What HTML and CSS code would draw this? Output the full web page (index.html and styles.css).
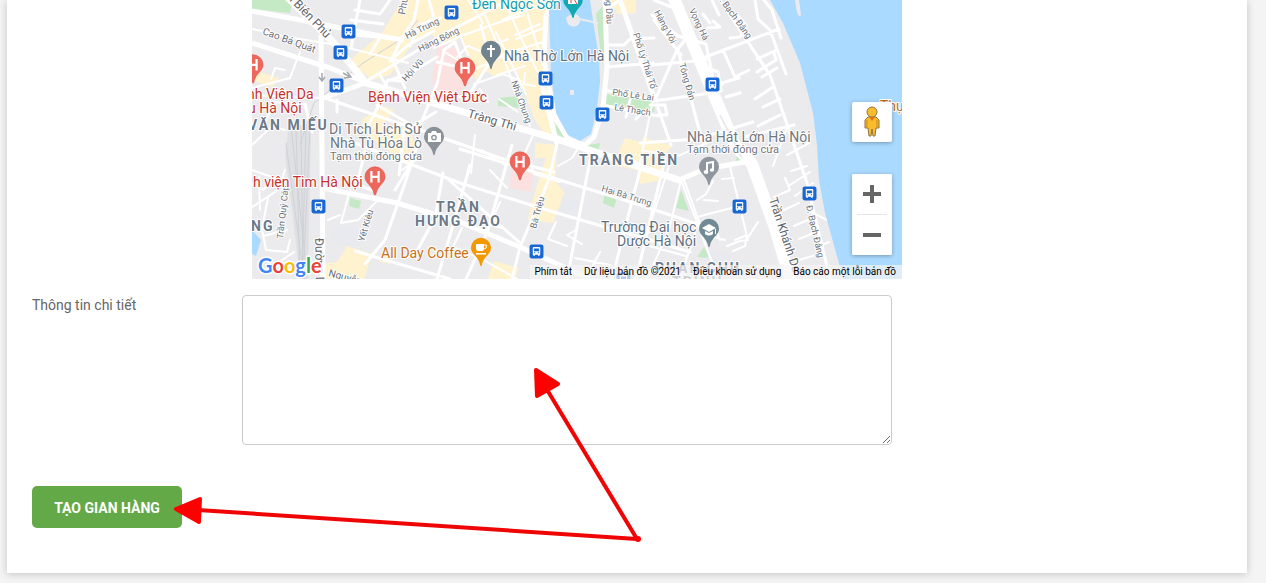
FILE: index.html
```
<!DOCTYPE html>
<html lang="vi">
<head>
<meta charset="utf-8">
<meta name="viewport" content="width=device-width, initial-scale=1">
<title>Tạo gian hàng</title>
<link rel="stylesheet" href="styles.css">
</head>
<body>
<main class="card">
<form class="shop-form">
  <div class="map">
    <svg class="map-canvas" viewBox="252 0 650 279" preserveAspectRatio="xMinYMin slice" role="img" aria-label="Bản đồ Hà Nội">
      <defs>
        <symbol id="bus" viewBox="0 0 14 14">
          <rect x="0.5" y="0.5" width="13" height="13" rx="2" fill="#1967d2"/>
          <path d="M3.5 3.5Q3.5 2.7 4.5 2.7H9.5Q10.5 2.7 10.5 3.5V10H9.8V11.3H8.6V10H5.4V11.3H4.2V10H3.5Z" fill="#fff"/>
          <path d="M4.6 4.2H9.4V6.8H4.6Z" fill="#1967d2"/>
          <path d="M4.6 8.2H5.8M8.2 8.2H9.4" stroke="#1967d2"/>
        </symbol>
        <symbol id="pin" viewBox="0 0 22 30">
          <path d="M11 .8A10 10 0 0 0 1 10.800C1 17.500 8.5 19 10.2 28.3Q11 30 11.8 28.3C13.5 19 21 17.500 21 10.800A10 10 0 0 0 11 .8Z"/>
        </symbol>
        <symbol id="hospital" viewBox="0 0 22 30">
          <use href="#pin" width="22" height="30" fill="#ee675c" stroke="#e0483d" stroke-width=".6"/>
          <path d="M7.4 5V16.500M14.6 5V16.500M7.4 10.8H14.6" stroke="#fff" stroke-width="2.200" fill="none"/>
        </symbol>
      </defs>
      <rect x="252" width="650" height="279" fill="#ebebed"/>
      <g class="blocks">
        <path fill="#fff2cf" d="M349 61L382 33L402 0H558L547 18L545 70L556 139L545 135L535 120L524 92L516 70L495 77L484 70L475 80L470 60L462 38L444 45L429 32L410 47L390 75L372 80ZM252 70L279 78L272 87L252 80ZM361 120L384 106L394 110L382 126L410 128L418 160L406 164L365 133ZM535 143L557 145L555 180L564 193L553 223L528 220L531 205L546 158L535 158ZM347 246L372 254L364 279H320V264L337 262ZM494 261L519 268L515 279H488ZM625 138L645 143L665 163L662 180L640 184L637 170L613 165ZM643 137L672 146L662 158L640 155ZM382 253L394 254L391 264L380 262ZM609 0H636V13L618 14Z"/>
        <path fill="#fbe2e0" d="M438 44L460 50L465 78L462 101L437 95L432 80ZM511 167L534 170L531 192L510 188Z"/>
        <path fill="#c5e8c5" d="M252 0H293L290 13L252 9ZM498 98L519 96L520 108L498 106ZM603 94L655 100L654 112L604 104ZM350 198L361 201L359 209L349 206ZM605 192L617 197L614 208L603 203ZM681 190L689 211L676 208ZM739 152L745 163L735 162ZM557 118L566 137L583 146L600 143L598 152L579 150L555 132ZM596 14L605 3L607 44L602 64ZM704 247L710 258L697 257Z"/>
        <path fill="#e8eaef" d="M334 229L351 226L365 234L361 246L335 244ZM563 196L581 202L575 217L559 214ZM709 250L730 255L725 279H704ZM264 41L274 46L272 51L263 49Z"/>
      </g>
      <path class="rail-bed" d="M289 125H311L308 279H300L292 210L285 155Z"/>
      <path class="rail" d="M286 143L304 279M291 126L306 265M296 126L300 279M301 126L303 279M306 126L302 279M310 126L303 279M418 20L403 38L363 63L314 103L300 145"/>
      <g class="streets">
        <path class="lane" d="M253 29L287 37L337 45L408 63M252 88L290 78L300 52M252 95L320 98M271 79L275 68L285 70M265 123L274 102L306 105M252 145L272 126L285 130M252 170L275 178L263 190L252 184M252 207L278 190L285 170M268 198L262 229L266 250L287 252L290 240M263 236L287 230M272 267L294 252M259 177L260 210"/>
        <path d="M360 0L351 48M355 10L380 14L390 0M351 20L383 24M354 35L401 39L434 18L429 0M391 61L402 38L414 20L418 0M390 61L408 45L434 31M410 46L420 25L440 18M380 75L391 93M393 60L405 88M365 82L453 29L479 16L507 0M391 80L412 72L437 57M378 102L388 80L400 81M368 126L384 95M419 128L437 84L444 50L455 42L465 70M437 62L462 68M433 92L467 98L490 62L481 25M377 105L413 126L436 112M325 98L460 144M337 100L337 112M305 104L312 132"/>
        <path class="lane" d="M434 48L464 35L500 22L524 15M443 51L469 67M465 74L511 52L543 42M474 84L503 74L521 81M457 57L468 46L480 51L508 39M458 30L468 55M485 15L507 67L530 126M496 32L526 94M502 20L545 3M515 35L540 24M468 0L483 23M523 0L546 73M504 0L521 38L544 85M516 39L546 27M497 75L525 66M499 99L518 112M480 89L488 102M525 73L524 84L535 86"/>
        <path d="M607 45L624 45L630 39L654 38M607 67L653 63M604 90L657 101M602 105L658 116M626 117L630 100M643 111L636 119M607 9L620 0M652 15L678 36L706 44L713 78L723 83L717 90M654 20L681 55M654 0L674 8M652 65L706 60M703 58L779 29M655 100L677 50L685 40M678 50L700 133M654 101L711 93M658 108L671 145M640 143L697 139L753 122M650 105H665L667 115H658M708 28L720 27L713 21M710 23L703 14M738 16L746 25L740 37L730 38M723 50L735 77L749 70M712 0L719 15M720 0L770 75L790 133L807 183L830 279M755 0L758 19L770 30L786 74M764 0L772 10L781 38M757 59L777 50M757 72L776 60L774 53M762 77L777 68M755 99L773 87M763 107L780 99M726 97L740 93M758 126L780 115M725 82L739 78M744 137L794 125M700 65L718 72L721 91"/>
        <path d="M347 140L460 183L547 210L690 252M460 149L640 205L703 226M380 38L370 54M419 140L405 183L385 240L365 264M404 131L399 175M365 151L357 185L372 190M414 159L395 190M443 173L435 218L414 256M470 165L456 215L437 279M512 145L487 233L466 279M558 140L548 182L520 247L512 279M592 150L567 279M640 170L612 279M665 159L636 279M415 128L500 158L554 172M355 251L450 279M449 180L519 242"/>
        <path class="lane" d="M420 157L402 170M350 190L341 223L358 220L378 200M328 220L340 215M462 228L453 247L482 259L517 279M485 236L500 202M490 170L507 188M480 222L502 228M475 135L471 173M505 165L482 150M529 156L534 174L560 182M535 131L524 155M558 166L572 158L580 145M556 222L548 239L567 246M576 230L567 235L582 244M600 252L592 267M575 258L610 265"/>
        <path class="lane" d="M653 100L640 163M625 155L640 164L676 179M645 151L678 156L709 142M681 180L669 230L647 279M681 180L710 257L720 279M684 180L704 235L725 240M730 167L748 240L740 241L727 246M735 240L747 235L745 246L733 251M697 217L739 206M697 200L706 194L713 181M704 200L718 201M722 179L734 178M750 162L790 279M774 197L790 190L785 178M787 155L809 143M786 130L773 166M810 172L790 185M791 171L807 166M799 203L784 210M808 220L794 226M799 239L814 233M811 212L831 222M813 183L795 196M817 247L829 242M799 260L823 253M670 163L650 225M649 246L686 256M695 233L680 279M720 240L713 223M747 239L758 222"/>
      </g>
      <g class="roads">
        <path d="M252 11L295 19L390 38L404 40M252 43L330 68L365 82M321 35L323 279M323 188L397 203L460 222L520 247L590 279M323 98L365 83M542 84L557 144M605 0L607 67L603 108L594 137L585 145L568 139L556 119L549 88L544 59L546 16L555 0M620 0L655 100M679 180L705 169L739 163L754 160"/>
        <path class="avenue" d="M285 -5L333 42L366 83L460 111L557 139L640 167L682 181"/>
        <path class="avenue wide" d="M673 -4L711 88L735 145L752 164L774 225L792 285"/>
      </g>
      <path class="water" d="M549 9L553 0H590L592 14L599 58L600 82L597 108L591 134L580 141L568 135L556 113L551 75ZM770 0L783 23L800 63L813 113L817 145L819 180L825 213L840 267L844 279H902V0ZM252 230L261 240L256 256L252 254Z"/>
      <path fill="#ebebed" d="M566 18Q569 14 575 14Q581 15 580 22Q577 28 571 26Q567 25 566 18ZM570 90H574V95H570ZM795 0H799L801 15Q799 18 797 12Z"/>
      <path fill="none" stroke="#ebebed" stroke-width="2" d="M579 19L598 23"/>
      <path fill="none" stroke="#ebebed" stroke-width="2" d="M720 115L742 158"/>
      <path fill="none" stroke="#a4a7ab" stroke-width="1.5" d="M322 73V80M319 77L322 81L325 77M343 73L350 77M344 78L351 77L347 72"/>

      <g class="street-names">
        <text class="major" transform="translate(282 -7) rotate(46)">ện Biên Phủ</text>
        <text transform="translate(262 34) rotate(20)">Cao Bá Quát</text>
        <text transform="translate(405 15) rotate(-80)">Phủ</text>
        <text class="small" transform="translate(407 39) rotate(-26)">Hà Trung</text>
        <text class="small" transform="translate(420 52) rotate(-26)">Hàng Bông</text>
        <text class="small" transform="translate(406 82) rotate(-48)">Hội Vũ</text>
        <text class="small" transform="translate(511 82) rotate(70)">Nhà Chung</text>
        <text class="major" transform="translate(467 117) rotate(16)">Tràng Thi</text>
        <text class="small" transform="translate(605 -9) rotate(87)">ong Dầu</text>
        <text class="small" transform="translate(633 34) rotate(72)">Phố Lý Thái Tổ</text>
        <text class="small" transform="translate(612 95) rotate(8)">Phố Lê Lai</text>
        <text class="small" transform="translate(614 110) rotate(9)">Lê Thạch</text>
        <text class="small" transform="translate(654 12) rotate(62)">Hàng Vôi</text>
        <text class="small" transform="translate(689 10) rotate(65)">Vọng Hà</text>
        <text class="small" transform="translate(716 -4) rotate(54)">Đ. Bạch Đằng</text>
        <text class="small" transform="translate(679 64) rotate(74)">Tông Đản</text>
        <text class="small" transform="translate(601 191) rotate(17)">Hai Bà Trưng</text>
        <text class="small" transform="translate(536 229) rotate(-75)">Bà Triệu</text>
        <text class="small" transform="translate(364 242) rotate(-73)">Yết Kiêu</text>
        <text class="small" transform="translate(283 239) rotate(-84)">Trần Quý Cáp</text>
        <text class="major" transform="translate(315 238) rotate(89)">Đường L</text>
        <text transform="translate(328 276) rotate(15)">Nguyễn</text>
        <text class="major" transform="translate(769 199) rotate(72)">Trần Khánh Dư</text>
        <text class="small" transform="translate(806 206) rotate(77)">Đ. Bạch Đằng</text>
      </g>

      <g class="districts">
        <text x="248" y="130">VĂN MIẾU</text>
        <text x="436" y="212">TRẦN</text>
        <text x="415" y="226">HƯNG ĐẠO</text>
        <text x="579" y="165">TRÀNG TIỀN</text>
        <text x="251" y="231">NG</text>
        <text x="655" y="273">PHAN CHU</text>
        <text x="672" y="287">TRINH</text>
      </g>

      <g class="places">
        <text class="teal" x="472" y="9">Đền Ngọc Sơn</text>
        <text class="slate" x="504" y="61">Nhà Thờ Lớn Hà Nội</text>
        <text class="red" x="368" y="102">Bệnh Viện Việt Đức</text>
        <text class="red" x="247" y="99">nh Viện Da</text>
        <text class="red" x="248" y="113">u Hà Nội</text>
        <text class="red" x="253" y="187">h viện Tim Hà Nội</text>
        <text class="grey" x="329" y="134">Di Tích Lịch Sử</text>
        <text class="grey" x="330" y="148">Nhà Tù Hỏa Lò</text>
        <text class="grey note" x="330" y="160">Tạm thời đóng cửa</text>
        <text class="grey" x="687" y="142">Nhà Hát Lớn Hà Nội</text>
        <text class="grey note" x="687" y="153">Tạm thời đóng cửa</text>
        <text class="slate" x="601" y="232">Trường Đại học</text>
        <text class="slate" x="617" y="246">Dược Hà Nội</text>
        <text class="orange" x="381" y="258">All Day Coffee</text>
        <text class="orange" x="880" y="111">Thụy</text>
      </g>

      <g class="stops">
        <use href="#bus" x="444" y="5" width="15" height="15"/>
        <use href="#bus" x="341" y="24" width="15" height="15"/>
        <use href="#bus" x="333" y="45" width="15" height="15"/>
        <use href="#bus" x="329" y="78" width="15" height="15"/>
        <use href="#bus" x="538" y="71" width="15" height="15"/>
        <use href="#bus" x="539" y="95" width="15" height="15"/>
        <use href="#bus" x="595" y="107" width="15" height="15"/>
        <use href="#bus" x="705" y="77" width="15" height="15"/>
        <use href="#bus" x="311" y="199" width="15" height="15"/>
        <use href="#bus" x="529" y="244" width="15" height="15"/>
        <use href="#bus" x="732" y="199" width="15" height="15"/>
        <use href="#bus" x="802" y="186" width="15" height="15"/>
        <use href="#bus" x="616" y="272" width="15" height="15"/>
      </g>
      <g class="pins">
        <use href="#hospital" x="242" y="54" width="22" height="30"/>
        <use href="#hospital" x="454" y="57" width="22" height="30"/>
        <use href="#hospital" x="509" y="151" width="22" height="30"/>
        <use href="#hospital" x="364" y="166" width="22" height="30"/>
        <use href="#pin" x="480" y="40" width="22" height="30" fill="#70838f"/>
        <path d="M491 45V57M487 49H495" stroke="#fff" stroke-width="2"/>
        <use href="#pin" x="423" y="126" width="22" height="30" fill="#8b9199"/>
        <path d="M428 133H431L432 131H436L437 133H441V142H428Z" fill="#fff"/>
        <circle cx="434" cy="137.500" r="2.200" fill="none" stroke="#8b9199" stroke-width="1.3"/>
        <use href="#pin" x="698" y="156" width="22" height="30" fill="#8f969d"/>
        <path d="M707 172V163L713 162V170" stroke="#fff" stroke-width="2" fill="none"/>
        <ellipse cx="706" cy="172" rx="2.4" ry="2" fill="#fff"/><ellipse cx="712" cy="170" rx="2.2" ry="1.8" fill="#fff"/>
        <use href="#pin" x="698" y="218" width="22" height="30" fill="#728a93"/>
        <path d="M702 228L709 224L716 228L709 232ZM705 231L709 233L713 231V234Q709 237 705 234ZM715 229H716V234H715Z" fill="#fff"/>
        <use href="#pin" x="470" y="237" width="22" height="30" fill="#f29900"/>
        <path d="M476 244H484V249Q484 251 482 251H478Q476 251 476 249ZM476 253H486V254.500H476Z" fill="#fff"/>
        <path d="M484 245H486.500Q487 249 484 249" stroke="#fff" fill="none"/>
        <use href="#pin" x="562" y="-10" width="22" height="29" fill="#12a9b5"/>
        <path d="M568 -3H578V4H568Z" fill="#fff"/><path d="M571 0V3M574 -1L577 4" stroke="#ea4335"/>
      </g>
      <text class="google" x="258" y="273"><tspan fill="#4285f4">G</tspan><tspan fill="#ea4335">o</tspan><tspan fill="#fbbc04">o</tspan><tspan fill="#4285f4">g</tspan><tspan fill="#34a853">l</tspan><tspan fill="#ea4335">e</tspan></text>
    </svg>
    <div class="controls">
      <button class="control pegman" type="button" aria-label="Chế độ xem phố">
        <svg width="20" height="32" viewBox="0 0 20 32" aria-hidden="true">
          <path d="M6 11H14L17 14V22L14 22L13 30H11L10 23L9 30H7L6 22L3 22V14Z" fill="#fbbc2b" stroke="#8f7440" stroke-linejoin="round"/>
          <circle cx="10" cy="6" r="5" fill="#fbbc2b" stroke="#8f7440"/>
          <path d="M7 11H13L10 15Z" fill="#e37418"/>
          <path d="M5 14V21M15 14V21" stroke="#c58b24"/>
        </svg>
      </button>
      <div class="zoom">
        <button class="control" type="button" aria-label="Phóng to"><svg width="18" height="18" viewBox="0 0 18 18"><path d="M9 0V18M0 9H18" stroke="#666" stroke-width="4"/></svg></button>
        <hr class="divider">
        <button class="control" type="button" aria-label="Thu nhỏ"><svg width="18" height="18" viewBox="0 0 18 18"><path d="M0 9H18" stroke="#666" stroke-width="4"/></svg></button>
      </div>
    </div>
    <div class="attribution">
      <button type="button">Phím tắt</button>
      <span>Dữ liệu bản đồ ©2021</span>
      <a href="#terms">Điều khoản sử dụng</a>
      <a href="#report">Báo cáo một lỗi bản đồ</a>
    </div>
  </div>
  <div class="field">
    <label for="details">Thông tin chi tiết</label>
    <textarea id="details" name="details"></textarea>
  </div>
  <button class="submit" type="submit">TẠO GIAN HÀNG</button>
  <svg class="arrows" width="470" height="180" viewBox="172 365 470 180" aria-hidden="true">
    <path d="M546 388L637 539L198 510" fill="none" stroke="#f00505" stroke-width="4" stroke-linecap="round" stroke-linejoin="round"/>
    <circle cx="638" cy="539" r="3"/>
    <path d="M536 370L558 384L537 396ZM176 509L200 499L199 522Z" stroke="#f00" stroke-width="4" stroke-linejoin="round"/>
  </svg>
</form>
</main>
</body>
</html>
```
FILE: styles.css
```
* { box-sizing: border-box; }
body {
  margin: 0;
  padding: 0 19px 10px 7px;
  background: #f4f4f4;
  color: #666;
  font: 14px/20px Roboto, sans-serif;
}
.card {
  background: #fff;
  box-shadow: 0 1px 8px rgba(0, 0, 0, .2);
}
.shop-form {
  position: relative;
  display: flex;
  flex-direction: column;
  align-items: flex-start;
  padding: 0 25px 45px;
}
.map {
  position: relative;
  align-self: stretch;
  max-width: 870px;
  margin-bottom: 16px;
  padding-left: 220px;
}
.map-canvas { display: block; width: 100%; height: 279px; }

.rail-bed { fill: #dfe0e4; }
.rail { fill: none; stroke: #cfd1d5; stroke-width: 1; }
.streets { fill: none; stroke: #fff; stroke-width: 3; stroke-linejoin: round; stroke-linecap: round; }
.streets .lane { stroke-width: 2; }
.roads { fill: none; stroke: #fff; stroke-width: 5; stroke-linejoin: round; }
.avenue { stroke-width: 7; }
.avenue.wide { stroke-width: 12; }
.water { fill: #aadaff; }

.map-canvas text {
  paint-order: stroke;
  stroke: #fff;
  stroke-width: 2px;
  stroke-linejoin: round;
}
.street-names { font-size: 10px; fill: #6b7076; }
.street-names .major { font-size: 12px; fill: #5f6469; }
.street-names .small { font-size: 9px; }
.districts { font-size: 14px; font-weight: 700; letter-spacing: 2px; fill: #6b7988; }
.places { font-size: 14px; }
.places .note { font-size: 11px; }
.teal { fill: #129eaf; }
.slate { fill: #607080; }
.grey { fill: #70777e; }
.red { fill: #c5322d; }
.orange { fill: #c77116; }
.map-canvas .google { font: 700 20px Lato, sans-serif; stroke-width: 3px; }

.controls {
  position: absolute;
  top: 102px;
  right: 10px;
  display: flex;
  flex-direction: column;
  gap: 32px;
}
.control {
  display: grid;
  place-items: center;
  width: 40px;
  height: 40px;
  padding: 0;
  border: 0;
  border-radius: 2px;
  background: #fff;
}
.pegman, .zoom { box-shadow: 0 1px 4px rgba(0, 0, 0, .3); }
.zoom { border-radius: 2px; background: #fff; }
.divider { height: 1px; margin: 0 5px; border: 0; background: #e6e6e6; }

.attribution {
  position: absolute;
  right: 0;
  bottom: 0;
  display: flex;
  gap: 12px;
  padding: 0 6px 0 5px;
  background: rgba(245, 245, 245, .7);
  color: #000;
  font-size: 10px;
  line-height: 14px;
}
.attribution a { color: inherit; text-decoration: none; }
.attribution button { padding: 0; border: 0; background: none; color: inherit; font: inherit; }

.field {
  display: grid;
  grid-template-columns: 210px minmax(0, 650px);
  width: 100%;
  margin-bottom: 41px;
}
.field textarea {
  display: block;
  width: 100%;
  height: 150px;
  padding: 8px;
  border: 1px solid #ccc;
  border-radius: 4px;
  background: #fff;
  font: inherit;
}
.submit {
  min-width: 150px;
  padding: 12px 20px 10px;
  border: 0;
  border-radius: 5px;
  background: #64a948;
  color: #fff;
  font: 700 14px/20px Roboto, sans-serif;
}
.arrows { position: absolute; top: 365px; left: 165px; fill: #f00; pointer-events: none; }
```
